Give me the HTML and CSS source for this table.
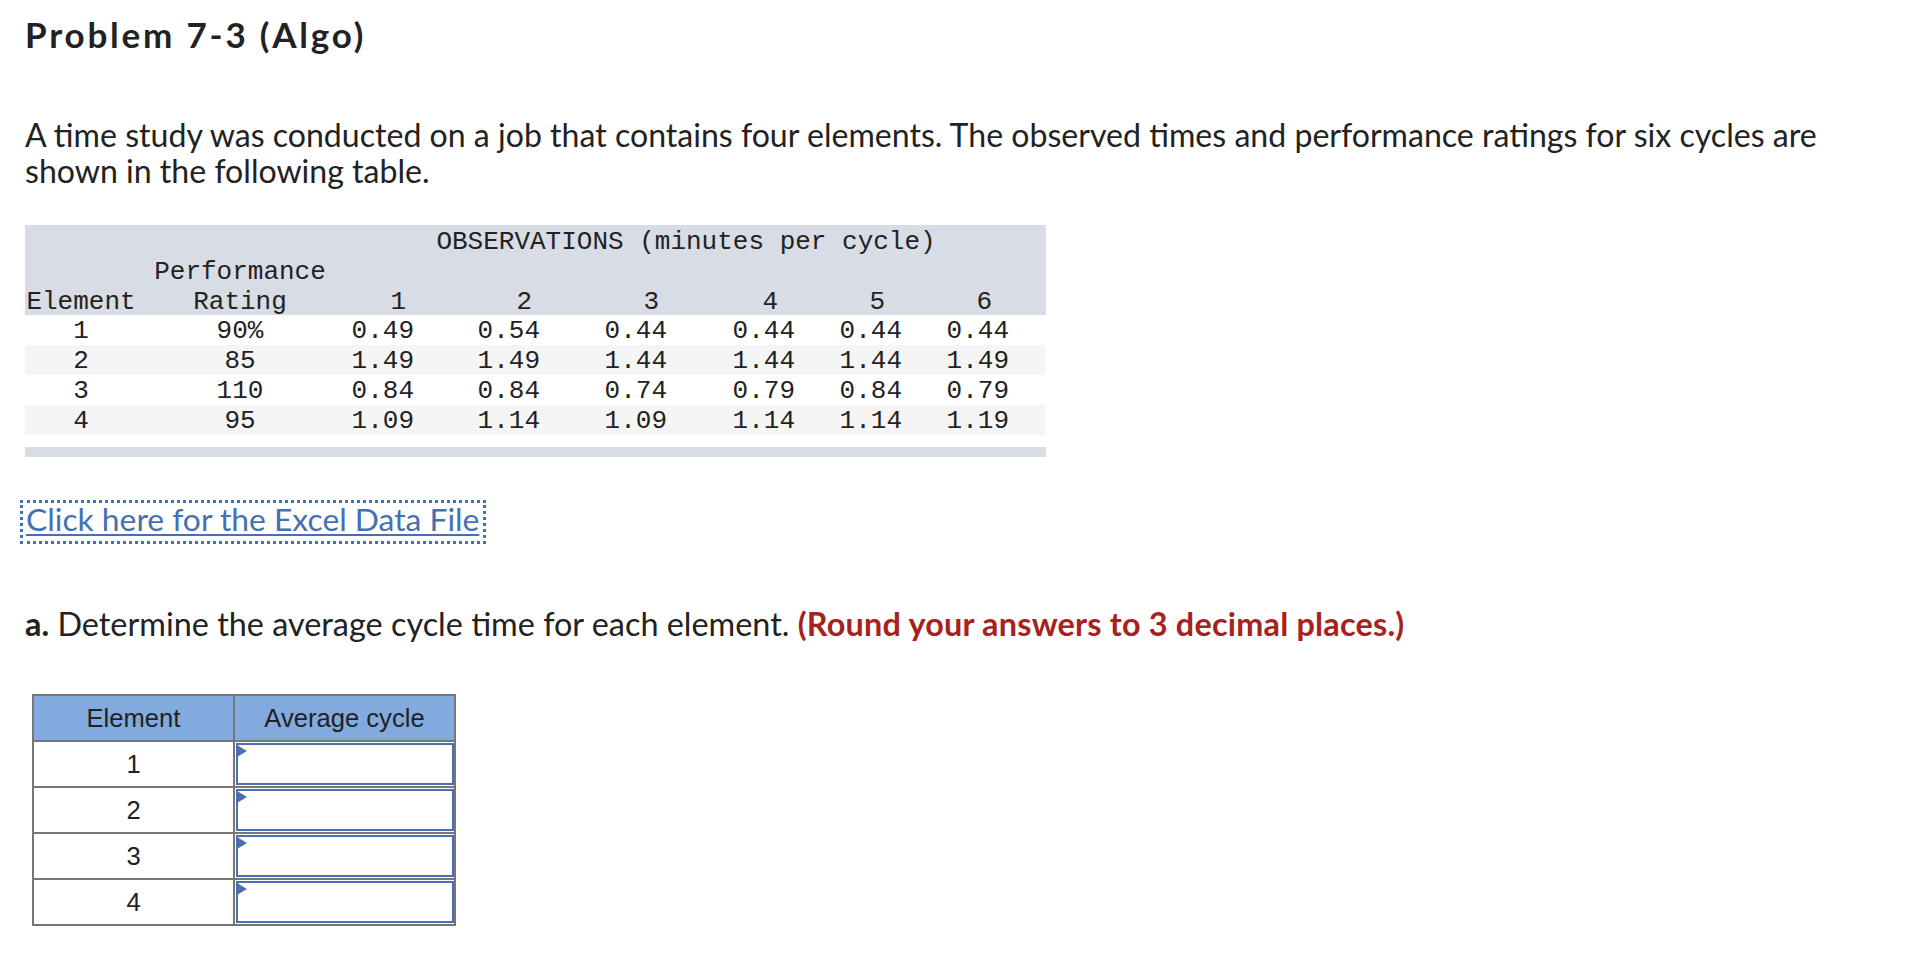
FILE: index.html
```html
<!DOCTYPE html>
<html lang="en">
<head>
<meta charset="utf-8">
<title>Problem 7-3 (Algo)</title>
<link rel="stylesheet" href="styles.css">
</head>
<body>
<main class="page">
  <h1 class="title">Problem 7-3 (Algo)</h1>
  <p class="intro">A time study was conducted on a job that contains four elements. The observed times and performance ratings for six cycles are shown in the following table.</p>

  <div class="obs-wrap">
    <table class="obs">
      <colgroup>
        <col class="c-el"><col class="c-pr"><col class="c-1"><col class="c-2"><col class="c-3"><col class="c-4"><col class="c-5"><col class="c-6"><col class="c-pad">
      </colgroup>
      <thead>
        <tr>
          <th></th><th></th>
          <th colspan="6" class="obs-title">OBSERVATIONS (minutes per cycle)</th>
          <th></th>
        </tr>
        <tr>
          <th></th><th class="ctr">Performance</th>
          <th></th><th></th><th></th><th></th><th></th><th></th><th></th>
        </tr>
        <tr>
          <th class="ctr">Element</th><th class="ctr">Rating</th>
          <th class="hn">1</th><th class="hn">2</th><th class="hn">3</th><th class="hn hn-w">4</th><th class="hn hn-w">5</th><th class="hn hn-w">6</th><th></th>
        </tr>
      </thead>
      <tbody>
        <tr>
          <td class="ctr">1</td><td class="ctr">90%</td>
          <td class="num">0.49</td><td class="num">0.54</td><td class="num">0.44</td><td class="num">0.44</td><td class="num">0.44</td><td class="num">0.44</td><td></td>
        </tr>
        <tr class="alt">
          <td class="ctr">2</td><td class="ctr">85</td>
          <td class="num">1.49</td><td class="num">1.49</td><td class="num">1.44</td><td class="num">1.44</td><td class="num">1.44</td><td class="num">1.49</td><td></td>
        </tr>
        <tr>
          <td class="ctr">3</td><td class="ctr">110</td>
          <td class="num">0.84</td><td class="num">0.84</td><td class="num">0.74</td><td class="num">0.79</td><td class="num">0.84</td><td class="num">0.79</td><td></td>
        </tr>
        <tr class="alt">
          <td class="ctr">4</td><td class="ctr">95</td>
          <td class="num">1.09</td><td class="num">1.14</td><td class="num">1.09</td><td class="num">1.14</td><td class="num">1.14</td><td class="num">1.19</td><td></td>
        </tr>
      </tbody>
    </table>
    <div class="obs-foot"></div>
  </div>

  <div class="file-line"><a class="file-link" href="#">Click here for the Excel Data File</a></div>

  <p class="question"><strong>a.</strong> Determine the average cycle time for each element. <strong class="note">(Round your answers to 3 decimal places.)</strong></p>

  <table class="answer">
    <thead>
      <tr><th>Element</th><th>Average cycle</th></tr>
    </thead>
    <tbody>
      <tr><td>1</td><td class="in-cell"><div class="inp"><span class="flag"></span></div></td></tr>
      <tr><td>2</td><td class="in-cell"><div class="inp"><span class="flag"></span></div></td></tr>
      <tr><td>3</td><td class="in-cell"><div class="inp"><span class="flag"></span></div></td></tr>
      <tr><td>4</td><td class="in-cell"><div class="inp"><span class="flag"></span></div></td></tr>
    </tbody>
  </table>
</main>
</body>
</html>
```

FILE: styles.css
```css
html, body {
  margin: 0;
  padding: 0;
  background: #ffffff;
}

body {
  font-family: Lato, "Open Sans", sans-serif;
  color: #222222;
}

.page {
  padding: 15px 0 0 25px;
}

.title {
  margin: 0;
  font-size: 35px;
  line-height: 38px;
  font-weight: 700;
  letter-spacing: 2.8px;
  color: #222222;
}

.intro {
  margin: 64px 0 0 0;
  font-size: 32.1px;
  line-height: 36px;
  max-width: 1830px;
}

/* observations table */
.obs-wrap {
  margin-top: 36px;
  width: 1021px;
}

.obs {
  width: 1021px;
  table-layout: fixed;
  border-collapse: collapse;
  border-spacing: 0;
  font-family: "Liberation Mono", "Courier New", monospace;
  font-size: 26px;
  color: #222222;
}

.obs col.c-el { width: 112px; }
.obs col.c-pr { width: 206px; }
.obs col.c-1 { width: 81px; }
.obs col.c-2 { width: 126px; }
.obs col.c-3 { width: 127px; }
.obs col.c-4 { width: 128px; }
.obs col.c-5 { width: 107px; }
.obs col.c-6 { width: 107px; }
.obs col.c-pad { width: 27px; }

.obs th, .obs td {
  padding: 3px 0 0 0;
  line-height: 27px;
  font-weight: 400;
  white-space: nowrap;
}

.obs thead th {
  padding-top: 5px;
  line-height: 25px;
}

.obs thead tr {
  background: #d8dce5;
}

.obs .obs-title {
  text-align: center;
  padding-left: 10px;
}

.obs .ctr {
  text-align: center;
}

.obs .hn {
  text-align: right;
  padding-right: 18px;
}

.obs .hn-w {
  padding-right: 27px;
}

.obs .num {
  text-align: right;
  padding-right: 10px;
}

.obs tbody tr {
  background: #ffffff;
}

.obs tbody tr.alt {
  background: #f5f5f5;
}

.obs-foot {
  margin-top: 12px;
  height: 10px;
  background: #d8dce5;
}

/* file link */
.file-line {
  margin-top: 43px;
  margin-left: -5px;
}

.file-link {
  display: inline-block;
  font-size: 31.8px;
  line-height: 36px;
  padding: 1px 7px 7px 6px;
  color: #4470b4;
  text-decoration: underline;
  text-decoration-thickness: 2px;
  text-underline-offset: 3px;
  outline: 3px dotted #4470b4;
  outline-offset: -3px;
}

.question {
  margin: 62px 0 0 0;
  font-size: 32.4px;
  line-height: 36px;
}

.question strong {
  font-weight: 700;
}

.question .note {
  color: #a6221e;
  letter-spacing: 0.2px;
}

/* answer table */
.answer {
  margin-top: 52px;
  margin-left: 7px;
  border-collapse: collapse;
  font-family: "Liberation Sans", Arial, sans-serif;
  font-size: 25.6px;
  color: #222222;
  border: 2px solid #767676;
}

.answer th, .answer td {
  border: 2px solid #767676;
  height: 44px;
  padding: 0;
  text-align: center;
  vertical-align: middle;
  font-weight: 400;
}

.answer th {
  background: #82aadf;
}

.answer th:first-child,
.answer td:first-child {
  width: 199px;
}

.answer th:last-child,
.answer td:last-child {
  width: 218px;
}

.answer td.in-cell {
  height: 42px;
  padding: 1px 0 1px 1px;
}

.inp {
  position: relative;
  box-sizing: border-box;
  height: 42px;
  border: 2px solid #4a70b3;
  background: #ffffff;
}

.flag {
  position: absolute;
  left: -1px;
  top: 0;
  width: 0;
  height: 0;
  border-left: 10px solid #4a70b3;
  border-top: 6px solid transparent;
  border-bottom: 6px solid transparent;
}
```
